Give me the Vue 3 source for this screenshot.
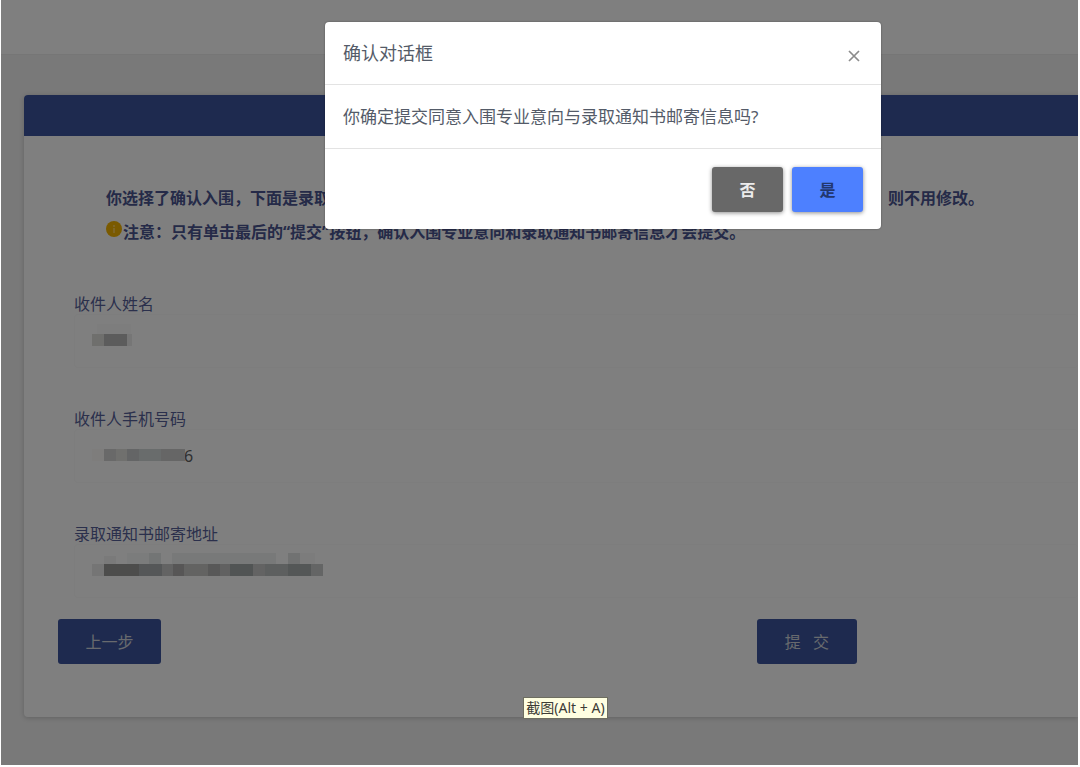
<script setup>
import { ref } from 'vue'

const fields = ref([
  { id: 'name', label: '收件人姓名', value: '', blocks: [
    [0, 14, 12, 12, '#dededa'], [12, 14, 23, 12, '#b8b8b8'], [35, 14, 5, 12, '#ececec'],
    [5, 4, 34, 10, '#fafafa'],
  ] },
  { id: 'phone', label: '收件人手机号码', value: '6', blocks: [
    [0, 14, 12, 12, '#fcfbf8'], [12, 14, 12, 12, '#d2d2d2'], [24, 14, 11, 12, '#e0e0dc'],
    [35, 14, 12, 12, '#c8cacc'], [47, 14, 22, 12, '#d2d8d8'], [69, 14, 24, 12, '#cccccc'],
  ] },
  { id: 'address', label: '录取通知书邮寄地址', value: '', blocks: [
    [0, 14, 12, 12, '#eaeaea'], [12, 14, 35, 12, '#9a9a98'], [47, 14, 23, 12, '#aaaeb0'],
    [70, 14, 11, 12, '#c6c6c6'], [81, 14, 11, 12, '#aeacac'], [92, 14, 24, 12, '#c6c6c4'],
    [116, 14, 12, 12, '#b0b0b0'], [128, 14, 10, 12, '#c2c2c2'], [138, 14, 23, 12, '#a2a8a8'],
    [161, 14, 12, 12, '#c6c6c6'], [173, 14, 23, 12, '#babebe'], [196, 14, 23, 12, '#a8aeae'],
    [219, 14, 12, 12, '#c8cbcb'],
    [12, 6, 12, 8, '#f4f4f4'], [35, 3, 22, 11, '#f6f8f8'], [57, 3, 12, 11, '#e6eaea'],
    [80, 3, 104, 11, '#f0f2f2'], [196, 3, 12, 11, '#e2e4e4'], [208, 3, 15, 11, '#f8f8f8'],
  ] },
])
const open = ref(true)
</script>

<template>
  <div class="page">
    <header class="topbar"></header>
    <main class="card">
      <div class="card-head"></div>
      <form class="card-body" @submit.prevent="open = true">
        <div class="notice">
          <p><span>你选择了确认入围，下面是录取</span><span class="tail">则不用修改。</span></p>
          <p>
            <svg class="info" viewBox="0 0 16 16" aria-hidden="true">
              <circle cx="8" cy="8" r="8" fill="#f5b400" />
              <path d="M8 4v2M8 7v5" stroke="#ffcc4a" stroke-width="2" fill="none" />
            </svg>
            <span>注意：只有单击最后的“提交”按钮，确认入围专业意向和录取通知书邮寄信息才会提交。</span>
          </p>
        </div>
        <div v-for="f in fields" :key="f.id" class="field">
          <label :for="f.id">{{ f.label }}</label>
          <div class="control">
            <input :id="f.id" v-model="f.value" :class="f.id" type="text" />
            <svg class="mask" viewBox="0 0 240 28" shape-rendering="crispEdges" aria-hidden="true">
              <rect v-for="(b, i) in f.blocks" :key="i" :x="b[0]" :y="b[1]" :width="b[2]" :height="b[3]" :fill="b[4]" />
            </svg>
          </div>
        </div>
        <div class="actions">
          <div><button type="button" class="prev">上一步</button></div>
          <div><button type="submit" class="submit">提&ensp;&nbsp;交</button></div>
        </div>
      </form>
    </main>
    <div v-if="open" class="backdrop">
      <section class="dialog" role="dialog" aria-modal="true" aria-labelledby="dialog-title">
        <header class="dialog-head">
          <h2 id="dialog-title">确认对话框</h2>
          <button type="button" class="close" aria-label="关闭" @click="open = false">
            <svg viewBox="0 0 12 12"><path d="M1 1l10 10M11 1L1 11" stroke="#8c8c8c" stroke-width="1.7" fill="none" /></svg>
          </button>
        </header>
        <p class="dialog-body">你确定提交同意入围专业意向与录取通知书邮寄信息吗?</p>
        <footer class="dialog-foot">
          <button type="button" class="no" @click="open = false">否</button>
          <button type="button" class="yes" @click="open = false">是</button>
        </footer>
      </section>
    </div>
    <div class="tooltip" role="tooltip">截图(Alt + A)</div>
  </div>
</template>

<style>
body { background: #fff; }
</style>

<style scoped>
* { box-sizing: border-box; }
.page {
  position: relative;
  overflow: hidden;
  margin: 0 2px 2px 1px;
  padding-bottom: 48px;
  background: #f2f2f2;
  color: #4a5590;
  font-family: "Noto Sans", "Noto Sans CJK SC", sans-serif;
  font-size: 16px;
  line-height: 24px;
}
p, h2 { margin: 0; }
button, input { font: inherit; }
button { border: 0; border-radius: 3px; cursor: pointer; }
.topbar { height: 55px; background: #fff; border-bottom: 1px solid #ececec; }
.card {
  margin: 40px 0 0 23px;
  border-radius: 4px 0 0 4px;
  background: #fff;
  box-shadow: 0 1px 5px rgba(0, 0, 0, .2);
}
.card-head { height: 41px; border-radius: 4px 0 0 0; background: #3c549e; }
.card-body { padding: 45px 0 53px 34px; }
.notice { padding-left: 48px; font-weight: 700; white-space: nowrap; }
.notice p { display: flex; height: 34px; align-items: center; }
.tail { margin-left: 558px; }
.info { width: 16px; height: 16px; margin: 0 1px 6px 0; flex: none; }
.notice + .field { margin-top: 43px; }
.field { margin-left: 16px; height: 115px; }
.field label { display: block; height: 22px; color: #566199; }
.control { position: relative; }
.control input {
  display: block;
  width: 100%;
  height: 54px;
  padding: 0 18px;
  border: 1px solid #fafafa;
  border-right: 0;
  border-radius: 4px;
  outline: 0;
  background: transparent;
  color: #606060;
}
.control input.phone { padding-left: 109px; }
.mask { position: absolute; left: 18px; top: 6px; width: 240px; height: 28px; }
.actions { display: grid; grid-template-columns: 37fr 17fr; margin-top: -18px; }
.actions button { display: block; height: 45px; background: #3c549e; color: #d0d4dc; }
.prev { width: 103px; }
.submit { width: 100px; }
.backdrop {
  position: absolute;
  z-index: 1;
  inset: 0;
  display: flex;
  align-items: flex-start;
  justify-content: center;
  padding: 22px 0 0 127px;
  background: rgba(0, 0, 0, .5);
}
.dialog {
  width: 556px;
  border-radius: 4px;
  background: #fff;
  color: #545b68;
  box-shadow: 0 0 2px rgba(0, 0, 0, .4);
}
.dialog-head {
  display: flex;
  justify-content: space-between;
  align-items: center;
  height: 63px;
  padding: 0 18px;
  border-bottom: 1px solid #e3e3e3;
}
.dialog-head h2 { font-size: 18px; font-weight: 400; }
.close { display: flex; padding: 3px; margin-top: 6px; background: none; }
.close svg { width: 12px; height: 12px; }
.dialog-body { height: 64px; padding: 20px 18px; border-bottom: 1px solid #e3e3e3; font-size: 17px; }
.dialog-foot { display: flex; justify-content: flex-end; gap: 9px; padding: 18px 18px 17px; }
.dialog-foot button { width: 71px; height: 45px; font-weight: 700; box-shadow: 0 1px 4px rgba(0, 0, 0, .45); }
.no { background: #686868; color: #ececec; }
.yes { background: #4d80ff; color: #22376f; }
.tooltip {
  position: absolute;
  z-index: 2;
  left: 48.5%;
  bottom: 46px;
  padding: 0 2px;
  border: 1px solid #6e6e60;
  background: #ffffe1;
  color: #3c3c36;
  font-size: 14px;
  line-height: 20px;
  white-space: nowrap;
}
</style>
